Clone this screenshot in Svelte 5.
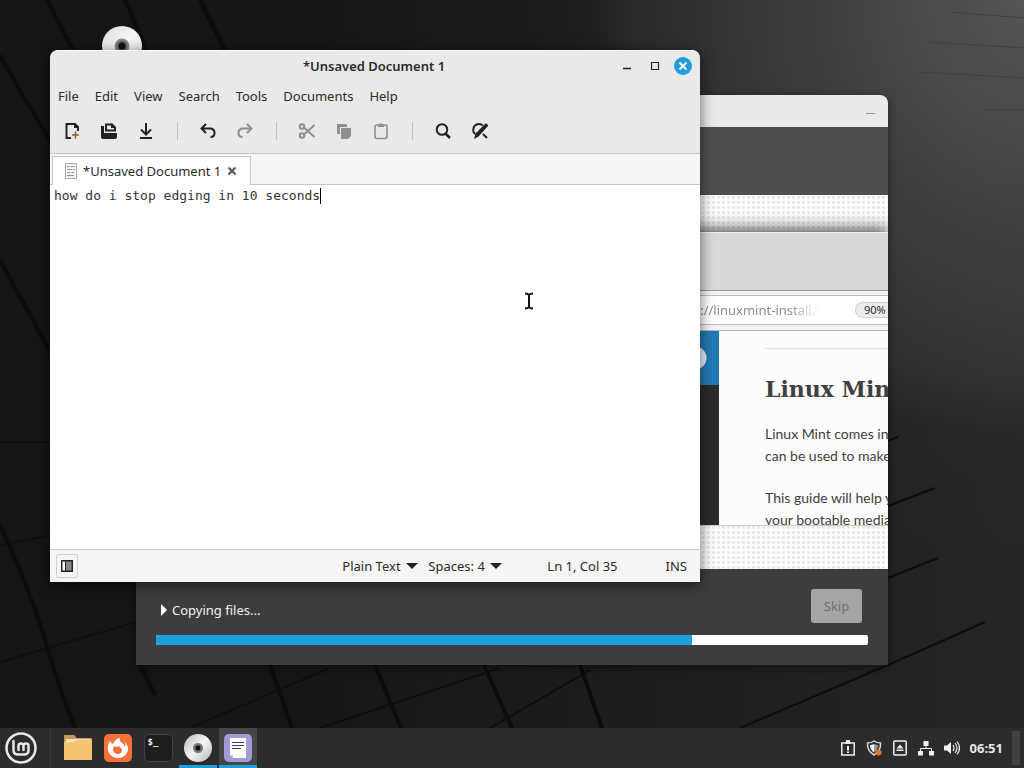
<script lang="ts">
    interface Tool {
        id: string;
        label: string;
        disabled?: boolean;
    }

    const menus = ["File", "Edit", "View", "Search", "Tools", "Documents", "Help"];

    const toolGroups: Tool[][] = [
        [
            { id: "new", label: "New" },
            { id: "open", label: "Open" },
            { id: "save", label: "Save" },
        ],
        [
            { id: "undo", label: "Undo" },
            { id: "redo", label: "Redo", disabled: true },
        ],
        [
            { id: "cut", label: "Cut", disabled: true },
            { id: "copy", label: "Copy", disabled: true },
            { id: "paste", label: "Paste", disabled: true },
        ],
        [
            { id: "find", label: "Find" },
            { id: "replace", label: "Find and replace" },
        ],
    ];

    const launchers = [
        { id: "files", label: "Files" },
        { id: "firefox", label: "Firefox" },
        { id: "terminal", label: "Terminal" },
        { id: "disc", label: "Install Linux Mint", running: true },
        { id: "editor", label: "Text Editor", running: true, active: true },
    ];

    const tray = ["report", "shield", "drive", "network", "volume"];

    let title = "*Unsaved Document 1";
    let text = $state("how do i stop edging in 10 seconds");
    let copied = $state(75.3);

    let lines = $derived(text.split("\n"));
    let column = $derived(lines[lines.length - 1].length);
</script>

{#snippet toolIcon(id: string)}
    <svg width="18" height="18" viewBox="0 0 18 18" fill="none" stroke="currentColor" stroke-width="2">
        {#if id === "new"}
            <path d="M8 16H3.500V2H12l3 3v4" />
            <path d="M11 1v5h5z" fill="currentColor" stroke="none" />
            <path d="M12.500 9.500v7M9 13h7" stroke="#8a5a3c" stroke-width="1.500" />
        {:else if id === "open"}
            <path d="M6 9V2.500h6l3 3V9" />
            <path d="M11 1v5h5z" fill="currentColor" stroke="none" />
            <path d="M1 4h3v7h13v4q0 2-2 2H3q-2 0-2-2z" fill="currentColor" stroke="none" />
            <path d="M5 8.500h11" />
        {:else if id === "save"}
            <path d="M9 1v11M4 7.500l5 5 5-5M3 16h12" />
        {:else if id === "undo"}
            <path d="M7 2L2.500 6.500 7 11M3 6.500h8q4.500 0 4.500 4.500 0 4-4 4" />
        {:else if id === "redo"}
            <path d="M11 2l4.500 4.500L11 11M15 6.500H7Q2.500 6.500 2.500 11q0 4 4 4" />
        {:else if id === "cut"}
            <circle cx="4" cy="4.500" r="2.200" />
            <circle cx="4" cy="13.500" r="2.200" />
            <path d="M6 5.500L16.500 15M6 12.500L16.500 3" />
        {:else if id === "copy"}
            <path d="M2 2h10v3H5v7H2z" fill="currentColor" stroke="none" />
            <path d="M6 6h10v8l-3 3H6z" fill="currentColor" stroke="none" />
        {:else if id === "paste"}
            <path d="M6 3H5Q3 3 3 5v9.500q0 2 2 2h8q2 0 2-2V5q0-2-2-2h-1" stroke-width="1.600" />
            <path d="M6 5V3.500q0-2 3-2t3 2V5z" fill="currentColor" stroke="none" />
        {:else if id === "find"}
            <circle cx="8" cy="7.500" r="5.300" />
            <path d="M11.500 11.500L16 16" stroke-width="2.500" />
        {:else}
            <path d="M12 3.500A5.500 5.500 0 1 0 4 12M12 12l4 4" />
            <path d="M3 17l1.500-5.500 10-10q2.500 0 2.500 2.500L7.500 14.500z" fill="currentColor" stroke="none" />
        {/if}
    </svg>
{/snippet}

{#snippet discArt(size: number, rim: string)}
    <svg width={size} height={size} viewBox="0 0 40 40">
        <defs>
            <linearGradient id="disc{size}" x1="0" y1="0" x2="1" y2="1">
                <stop offset="0" stop-color={rim} />
                <stop offset="0.500" stop-color="#f6f6f6" />
                <stop offset="1" stop-color={rim} />
            </linearGradient>
        </defs>
        <circle cx="20" cy="20" r="20" fill="url(#disc{size})" />
        <circle cx="20" cy="20" r="6.500" fill="#666" stroke="#8a8a8a" stroke-width="2" />
        <circle cx="20" cy="20" r="3.500" fill="#111" />
    </svg>
{/snippet}

{#snippet appIcon(id: string)}
    {#if id === "files"}
        <svg width="28" height="28" viewBox="0 0 28 28">
            <path d="M0 1h10l3 3h15v22H0z" fill="#c99a4c" />
            <path d="M2 5h24v6H2z" fill="#e9e4da" />
            <path d="M0 8h10l3-2h15v20H0z" fill="#f6c571" />
        </svg>
    {:else if id === "firefox"}
        <svg width="28" height="28" viewBox="0 0 28 28">
            <rect width="28" height="28" rx="5" fill="#f4713a" />
            <path d="M13 5q2-1 3-1-1 3 2 5 3 1 2 4 2-1 1-5 5 6 2 11-3 5-9 5T5 19q-3-6 1-12 1 2 3 3 1-3 4-5z" fill="#fff" />
            <path d="M10 12q3 2 5 0 1 2 3 3 0 5-4 5t-5-4q0-2 1-4z" fill="#f4713a" />
        </svg>
    {:else if id === "terminal"}
        <span class="terminal">$_</span>
    {:else if id === "disc"}
        {@render discArt(28, "#b4b4b4")}
    {:else}
        <svg width="28" height="28" viewBox="0 0 28 28">
            <rect width="28" height="28" rx="5" fill="#a39bd6" />
            <path d="M6 4h16v20H9l-3-3z" fill="#fff" />
            <path d="M6 21h3v3z" fill="#c9c4e8" />
            <path d="M8 8.500h12M8 11.500h12M8 14.500h9" stroke="#3d3a66" />
        </svg>
    {/if}
{/snippet}

{#snippet trayIcon(id: string)}
    <svg width="16" height="16" viewBox="0 0 16 16" fill="none" stroke="#f0f0f0" stroke-width="1.500">
        {#if id === "report"}
            <path d="M1.800 3h12.400v12H1.800zM5 2.800h6" />
            <path d="M6 0h4v4H6z" fill="#f0f0f0" stroke="none" />
            <path d="M8 6v4.500M8 11.500V13" stroke-width="2" />
        {:else if id === "shield"}
            <path d="M8 1q3 2 6.500 2 .500 8-6.500 12Q1 11 1.500 3 5 3 8 1z" stroke="#d8d8d8" />
            <path d="M8 4v8.500Q4 10 4 5q2 0 4-1z" fill="#f0f0f0" stroke="none" />
            <path d="M8 4v8.500q4-2.500 4-7.500-2 0-4-1z" fill="#999" stroke="none" />
            <circle cx="12.500" cy="12.500" r="3" fill="#ee7024" stroke="none" />
        {:else if id === "drive"}
            <rect x="1.800" y="1" width="12.400" height="14" rx="1" />
            <path d="M8 4.500L11.500 8.500h-7zM4.500 9.500h7V11h-7z" fill="#f0f0f0" stroke="none" />
        {:else if id === "network"}
            <path d="M5.500 1h5v5h-5zM0 11h5v4.500H0zM11 11h5v4.500h-5z" fill="#f0f0f0" stroke="none" />
            <path d="M8 6v3M2.500 11V8.500h11V11" stroke-width="1" />
        {:else}
            <path d="M0 5.500h3L7 2v12l-4-3.500H0z" fill="#f0f0f0" stroke="none" />
            <path d="M9 5q2 3 0 6M11 3q4 5 0 10M13 1.500q5 6.500 0 13" stroke-width="1.200" />
        {/if}
    </svg>
{/snippet}

{#snippet arrow()}
    <svg class="arrow" width="12" height="6" viewBox="0 0 12 6"><path d="M0 0h12L6 6z" fill="#222" /></svg>
{/snippet}

<div class="screen">
    <main class="desktop">
        <svg class="wallpaper" viewBox="0 0 1024 728" preserveAspectRatio="none" aria-hidden="true">
            <defs>
                <linearGradient id="floor" gradientUnits="userSpaceOnUse" x1="300" y1="0" x2="1024" y2="0">
                    <stop offset="0" stop-color="#151515" />
                    <stop offset="0.450" stop-color="#1d1d1d" />
                    <stop offset="1" stop-color="#252525" />
                </linearGradient>
                <radialGradient id="light" gradientUnits="userSpaceOnUse" cx="1024" cy="0" r="640">
                    <stop offset="0" stop-color="#fff" stop-opacity="0.220" />
                    <stop offset="0.400" stop-color="#fff" stop-opacity="0.110" />
                    <stop offset="0.600" stop-color="#fff" stop-opacity="0.060" />
                    <stop offset="0.680" stop-color="#fff" stop-opacity="0.010" />
                    <stop offset="0.900" stop-color="#fff" stop-opacity="0" />
                </radialGradient>
            </defs>
            <rect width="1024" height="728" fill="url(#floor)" />
            <rect width="1024" height="728" fill="url(#light)" />
            <g fill="none" stroke="#0c0c0c" stroke-width="4">
                <path d="M0 55Q30 110 60 155M47 0L73 50M0 260L60 370M0 525Q30 590 45 640T75 728M125 0L147 50M200 0L225 50" />
                <path d="M270 665l22 63M375 665l26 63M484 665l28 63M580 665l22 63M140 665l15 30" />
            </g>
            <g fill="none" stroke="#0e0e0e" stroke-width="2">
                <path d="M0 442H52M0 545L52 535M0 662L136 622M190 728L330 668M320 728L500 668M490 728L590 670" />
                <path d="M888 506L935 488M888 578L938 558M740 728L888 665 985 622M888 441l10-4" />
            </g>
            <g fill="none" stroke="#404040" stroke-width="1">
                <path d="M950 12L1024 18M930 42L1024 48M920 72L1024 78M985 110H1024" />
            </g>
        </svg>

        <div class="desktop-icon">{@render discArt(40, "#dcdcdc")}</div>

        <section class="window installer" aria-label="Install">
            <header class="installer-title">
                <button class="dash" aria-label="Minimize installer"></button>
            </header>
            <div class="banner"></div>
            <div class="slide">
                <div class="browser">
                    <div class="browser-tabs"></div>
                    <div class="browser-nav">
                        <div class="address">
                            <input type="text" aria-label="Address" value="https://linuxmint-installa" readonly />
                            <span class="zoom">90%</span>
                        </div>
                    </div>
                    <div class="page">
                        <div class="sidebar"><div class="sidebar-head"></div></div>
                        <article>
                            <hr />
                            <h2>Linux Mint</h2>
                            <p>Linux Mint comes in<br />can be used to make</p>
                            <p>This guide will help you<br />your bootable media</p>
                        </article>
                    </div>
                </div>
            </div>
            <footer class="progress">
                <div class="progress-row">
                    <details>
                        <summary>
                            <svg width="6" height="12" viewBox="0 0 6 12"><path d="M0 0l6 6-6 6z" fill="#fff" /></svg>
                            Copying files...
                        </summary>
                    </details>
                    <button class="skip" disabled>Skip</button>
                </div>
                <div class="bar" role="progressbar" aria-label="Copying files" aria-valuenow={copied}>
                    <div class="bar-fill" style="width: {copied}%"></div>
                </div>
            </footer>
        </section>

        <section class="window editor" aria-label="Text editor">
            <header class="titlebar">
                <h1>{title}</h1>
                <div class="window-buttons">
                    <button aria-label="Minimize">
                        <svg width="18" height="18" viewBox="0 0 18 18"><path d="M5 11.500h8" stroke="#222" stroke-width="1.400" /></svg>
                    </button>
                    <button aria-label="Maximize">
                        <svg width="18" height="18" viewBox="0 0 18 18"><path d="M5.500 5.500h7v7h-7z" fill="none" stroke="#222" stroke-width="1.200" /></svg>
                    </button>
                    <button aria-label="Close">
                        <svg width="18" height="18" viewBox="0 0 18 18">
                            <circle cx="9" cy="9" r="9" fill="#1f9ede" />
                            <path d="M5.500 5.500l7 7M12.500 5.500l-7 7" stroke="#fff" stroke-width="2" />
                        </svg>
                    </button>
                </div>
            </header>
            <nav class="menubar">
                {#each menus as menu}
                    <button>{menu}</button>
                {/each}
            </nav>
            <div class="toolbar">
                {#each toolGroups as group, i}
                    {#if i > 0}
                        <span class="separator"></span>
                    {/if}
                    {#each group as tool}
                        <button aria-label={tool.label} disabled={tool.disabled}>{@render toolIcon(tool.id)}</button>
                    {/each}
                {/each}
            </div>
            <div class="tabs">
                <div class="tab">
                    <svg width="12" height="16" viewBox="0 0 12 16">
                        <path d="M.5.5h11v15H.5z" fill="#f4f4f4" stroke="#aaa" />
                        <path d="M2 3.500h3M6 3.500h4M2 6.500h5M8 6.500h2M2 9.500h3M6 9.500h3M2 12.500h7" stroke="#999" />
                    </svg>
                    <span>{title}</span>
                    <button aria-label="Close tab">
                        <svg width="10" height="10" viewBox="0 0 10 10"><path d="M1.500 1.500l7 7M8.500 1.500l-7 7" stroke="#555" stroke-width="2" /></svg>
                    </button>
                </div>
            </div>
            <div class="document">
                <textarea bind:value={text} aria-label="Document" spellcheck="false"></textarea>
                <span class="caret" style="left: calc(4px + {column}ch)"></span>
                <svg class="pointer" width="10" height="18" viewBox="0 0 10 18">
                    <path d="M1 1.500q3 0 4 1.500 1-1.500 4-1.500M5 3v12M1 16.500q3 0 4-1.500 1 1.500 4 1.500" fill="none" stroke="#111" stroke-width="2" />
                </svg>
            </div>
            <footer class="statusbar">
                <button class="panel-toggle" aria-label="Side panel">
                    <svg width="12" height="12" viewBox="0 0 12 12">
                        <path d="M0 0h12v12H0z" fill="#222" />
                        <path d="M1.500 1.500H4v9H1.500z" fill="#fff" />
                        <path d="M5 1.500h5.500v9H5z" fill="#888" />
                    </svg>
                </button>
                <div class="pickers">
                    <label>
                        <select aria-label="Highlight mode"><option>Plain Text</option></select>
                        {@render arrow()}
                    </label>
                    <label>
                        <select aria-label="Tab width"><option>Spaces: 4</option></select>
                        {@render arrow()}
                    </label>
                </div>
                <span class="position">Ln {lines.length}, Col {column + 1}</span>
                <span>INS</span>
            </footer>
        </section>
    </main>

    <footer class="taskbar">
        <button class="mint" aria-label="Menu">
            <svg width="32" height="32" viewBox="0 0 32 32" fill="none" stroke="#e8e8e8" stroke-linecap="round">
                <circle cx="16" cy="16" r="14.500" stroke-width="2.500" />
                <path d="M8.500 9v9q0 4.500 4.500 4.500h6q4.500 0 4.500-4.500v-4q0-2.500-2.500-2.500T18.500 14v4M18.500 14q0-2.500-2.500-2.500T13.500 14v4" stroke-width="2.500" />
            </svg>
        </button>
        <div class="launchers">
            {#each launchers as app}
                <button class:running={app.running} class:active={app.active} aria-label={app.label}>
                    {@render appIcon(app.id)}
                </button>
            {/each}
        </div>
        <div class="tray">
            {#each tray as id}
                <button aria-label={id}>{@render trayIcon(id)}</button>
            {/each}
            <time>06:51</time>
        </div>
        <button class="show-desktop" aria-label="Show desktop"></button>
    </footer>
</div>

<style>
    :global(body) {
        margin: 0;
    }

    .screen {
        display: flex;
        flex-direction: column;
        height: 100vh;
        overflow: hidden;
        font-family: "Noto Sans", "Open Sans", sans-serif;
        font-size: 13px;
        line-height: 18px;
        color: #2b2b2b;
    }

    .screen * {
        box-sizing: border-box;
    }

    svg {
        display: block;
        flex: none;
    }

    button {
        display: flex;
        align-items: center;
        justify-content: center;
        padding: 0;
        border: 0;
        background: none;
        font: inherit;
        color: inherit;
    }

    .desktop {
        position: relative;
        flex: 1;
        min-height: 0;
        overflow: hidden;
    }

    .wallpaper {
        position: absolute;
        inset: 0;
        width: 100%;
        height: 100%;
    }

    .desktop-icon {
        position: absolute;
        top: 26px;
        left: 102px;
    }

    .window {
        position: absolute;
        display: flex;
        flex-direction: column;
        overflow: hidden;
        border-radius: 8px 8px 0 0;
    }

    /* installer */
    .installer {
        inset: 95px 136px 63px;
        background: #3d3d3d;
        box-shadow: 0 2px 8px rgba(0, 0, 0, 0.5);
    }

    .installer-title {
        display: flex;
        align-items: center;
        justify-content: flex-end;
        height: 32px;
        padding: 4px 13px 0 0;
        background: #e9e9e9;
    }

    .dash {
        width: 9px;
        height: 1px;
        background: #999;
    }

    .banner {
        height: 68px;
        background: #4e4e4e;
    }

    .slide {
        display: flex;
        flex-direction: column;
        flex: 1;
        min-height: 0;
        padding: 37px 0 43px;
        background: radial-gradient(circle, #e6e6e6 1px, transparent 2px) 0 0 / 5px 5px #fbfbfb;
    }

    .browser {
        display: flex;
        flex-direction: column;
        flex: 1;
        min-height: 0;
        box-shadow: 0 -3px 14px rgba(0, 0, 0, 0.7);
        clip-path: inset(-18px 0 0 0);
    }

    .browser-tabs {
        height: 59px;
        background: #d9d9d9;
        border-top: 1px solid #f0f0f0;
        border-bottom: 1px solid #999;
    }

    .browser-nav {
        padding: 4px 0 5px;
        background: #f4f4f4;
        border-bottom: 1px solid #b5b5b5;
    }

    .address {
        display: flex;
        align-items: center;
        height: 30px;
        background: #fff;
        border-top: 1px solid #bbb;
        border-bottom: 1px solid #bbb;
    }

    .address input {
        flex: 1;
        min-width: 0;
        margin-right: 36px;
        padding: 0;
        border: 0;
        background: none;
        font: inherit;
        color: #8c8c8c;
        text-align: right;
        outline: none;
        mask-image: linear-gradient(to left, transparent, #000 30px);
    }

    .zoom {
        width: 33px;
        padding-left: 8px;
        border: 1px solid #d0d0d0;
        border-right: 0;
        border-radius: 8px 0 0 8px;
        background: #ececec;
        font-size: 11px;
        line-height: 14px;
    }

    .page {
        display: flex;
        flex: 1;
        min-height: 0;
        background: #fcfcfc;
        border-bottom: 1px solid #ccc;
    }

    .sidebar {
        flex: 1;
        background: #2b2b2b;
    }

    .sidebar-head {
        height: 54px;
        background: radial-gradient(circle at calc(100% - 24px) 50%, #e8f0f6 11px, transparent 12px) #2479b5;
    }

    article {
        width: 169px;
        padding-left: 46px;
        overflow: hidden;
        white-space: nowrap;
        font-family: Lato, sans-serif;
        font-size: 14px;
        line-height: 22px;
        color: #404040;
    }

    article hr {
        margin: 17px 0 0;
        border: 0;
        border-top: 1px solid #e1e4e5;
    }

    article h2 {
        margin: 24px 0 18px;
        font-family: "DejaVu Serif", serif;
        font-size: 22px;
        line-height: 32px;
    }

    article p {
        margin: 0 0 20px;
    }

    .progress {
        display: flex;
        flex-direction: column;
        gap: 12px;
        padding: 20px;
    }

    .progress-row {
        display: flex;
        align-items: center;
        justify-content: space-between;
        padding: 0 6px 0 5px;
    }

    summary {
        display: flex;
        align-items: center;
        gap: 5px;
        padding-top: 8px;
        color: #f0f0f0;
    }

    .skip {
        width: 51px;
        height: 34px;
        border-radius: 3px;
        background: #a5a5a5;
        color: #707070;
    }

    .bar {
        height: 10px;
        border-radius: 2px;
        background: #fff;
        overflow: hidden;
    }

    .bar-fill {
        height: 100%;
        background: #1f9ede;
    }

    /* editor */
    .editor {
        inset: 50px 324px 146px 50px;
        background: #e9e9e9;
        box-shadow: 0 3px 14px rgba(0, 0, 0, 0.6);
    }

    .titlebar {
        display: grid;
        grid-template-columns: 1fr auto 1fr;
        align-items: center;
        height: 32px;
        padding: 0 8px 0 6px;
        border-radius: 8px 8px 0 0;
        box-shadow: inset 0 1px #f8f8f8;
    }

    .titlebar h1 {
        grid-column: 2;
        margin: 0;
        font-size: 13px;
        line-height: 18px;
        font-weight: 600;
    }

    .window-buttons {
        display: flex;
        justify-content: flex-end;
        gap: 10px;
    }

    .menubar {
        display: flex;
        gap: 16px;
        height: 28px;
        padding: 0 8px;
    }

    .toolbar {
        display: flex;
        align-items: center;
        gap: 1px;
        height: 44px;
        padding: 0 4px 2px;
        border-bottom: 1px solid #c8c8c8;
        color: #222;
    }

    .toolbar button {
        width: 36px;
        height: 36px;
    }

    .toolbar button:disabled {
        color: #8f8f8f;
    }

    .separator {
        width: 24px;
        height: 18px;
        background: linear-gradient(#c0c0c0, #c0c0c0) center / 1px 100% no-repeat;
    }

    .tabs {
        display: flex;
        height: 31px;
        padding: 2px 2px 0;
        background: #f5f5f5;
        border-bottom: 1px solid #c8c8c8;
    }

    .tab {
        display: flex;
        align-items: center;
        gap: 6px;
        height: 29px;
        padding: 0 13px 0 12px;
        background: #fff;
        border: 1px solid #c8c8c8;
        border-bottom: 0;
    }

    .document {
        position: relative;
        display: flex;
        flex: 1;
        min-height: 0;
        background: #fff;
        font-family: "DejaVu Sans Mono", monospace;
        font-size: 13px;
        line-height: 16px;
    }

    textarea {
        flex: 1;
        padding: 3px 4px;
        border: 0;
        outline: none;
        resize: none;
        background: none;
        font: inherit;
        color: #333;
    }

    .caret {
        position: absolute;
        top: 3px;
        width: 1px;
        height: 16px;
        background: #000;
    }

    .pointer {
        position: absolute;
        top: 107px;
        left: 474px;
    }

    .statusbar {
        display: flex;
        align-items: center;
        height: 33px;
        padding: 0 13px 0 6px;
        background: #f5f5f5;
        border-top: 1px solid #c8c8c8;
    }

    .panel-toggle {
        width: 22px;
        height: 24px;
        margin-right: auto;
        border: 1px solid #d0d0d0;
        border-radius: 2px;
    }

    .pickers {
        display: flex;
        gap: 10px;
    }

    .pickers label {
        display: flex;
        align-items: center;
        gap: 5px;
    }

    select {
        appearance: none;
        padding: 0;
        border: 0;
        background: none;
        font: inherit;
        color: inherit;
    }

    .arrow {
        pointer-events: none;
    }

    .position {
        margin: 0 48px 0 45px;
    }

    /* panel */
    .taskbar {
        display: flex;
        align-items: center;
        height: 40px;
        padding: 0 4px 0 5px;
        background: #2c2c2c;
    }

    .launchers {
        display: flex;
        align-self: stretch;
        margin-left: 13px;
        padding-left: 7px;
        border-left: 1px solid #3a3a3a;
    }

    .launchers button {
        width: 38px;
        margin: 0 1px;
        border-top: 3px solid transparent;
        border-bottom: 3px solid transparent;
    }

    .launchers .running {
        border-bottom-color: #1f9ede;
    }

    .launchers .active {
        border-top-color: #464646;
        background: #464646;
    }

    .terminal {
        width: 29px;
        height: 28px;
        padding: 1px 3px;
        border: 1px solid #444;
        border-radius: 5px;
        background: #1e1e1e;
        font: bold 9px/12px "DejaVu Sans Mono", monospace;
        text-align: left;
        color: #eee;
    }

    .tray {
        display: flex;
        align-items: center;
        gap: 10px;
        margin-left: auto;
        font-weight: 700;
        color: #e8e8e8;
    }

    .show-desktop {
        width: 8px;
        height: 34px;
        margin-left: 9px;
        background: #404040;
    }
</style>
